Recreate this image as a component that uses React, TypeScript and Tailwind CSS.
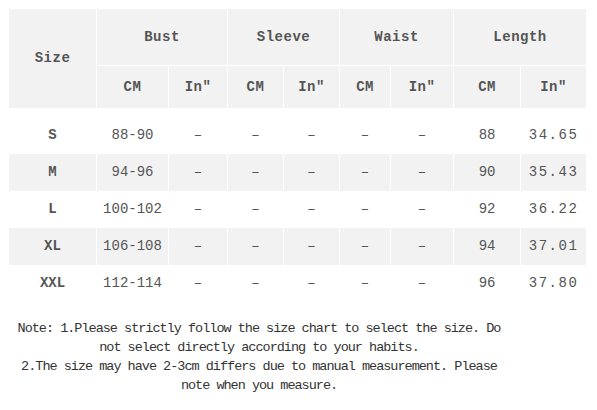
import React from 'react';

// size chart rows
interface SizeRow {
  size: string;
  bust: string;
  length: string;
  lengthIn: string;
}

const rows: SizeRow[] = [
  { size: 'S', bust: '88-90', length: '88', lengthIn: '34.65' },
  { size: 'M', bust: '94-96', length: '90', lengthIn: '35.43' },
  { size: 'L', bust: '100-102', length: '92', lengthIn: '36.22' },
  { size: 'XL', bust: '106-108', length: '94', lengthIn: '37.01' },
  { size: 'XXL', bust: '112-114', length: '96', lengthIn: '37.80' },
];

const widths = [88, 72, 59, 56, 56, 51, 63, 67, 66];

const head = "font-['Liberation_Mono',monospace] font-bold text-[14px] tracking-[0.5px] text-[#555] bg-[#f2f2f2] border border-white text-center";
const num = "font-['Liberation_Mono',monospace] text-[14px] text-[#555] text-center border-x border-white";

export default function App() {
  return (
    <main className="w-[597px] h-[410px] bg-white pt-2 pl-2">
      <table className="table-fixed border-collapse w-[578px]">
        <colgroup>
          {widths.map((w, i) => (
            <col key={i} style={{ width: w }} />
          ))}
        </colgroup>
        <thead>
          <tr className="h-[57px]">
            <th rowSpan={2} className={head}>Size</th>
            <th colSpan={2} className={head}>Bust</th>
            <th colSpan={2} className={head}>Sleeve</th>
            <th colSpan={2} className={head}>Waist</th>
            <th colSpan={2} className={head}>Length</th>
          </tr>
          <tr className="h-[43px]">
            {['Bust', 'Sleeve', 'Waist', 'Length'].map((g) => (
              <React.Fragment key={g}>
                <th className={head}>CM</th>
                <th className={head}>In"</th>
              </React.Fragment>
            ))}
          </tr>
        </thead>
        <tbody>
          <tr className="h-[8px]">
            <td colSpan={9} className="p-0" />
          </tr>
          {rows.map((r, i) => (
            <tr key={r.size} className={`h-[37px] ${i % 2 === 1 ? 'bg-[#f2f2f2]' : 'bg-white'}`}>
              <td className="font-['Liberation_Mono',monospace] font-bold text-[14px] text-[#555] text-center border-x border-white">{r.size}</td>
              <td className={num}>{r.bust}</td>
              <td className={num}>–</td>
              <td className={num}>–</td>
              <td className={num}>–</td>
              <td className={num}>–</td>
              <td className={num}>–</td>
              <td className={num}>{r.length}</td>
              <td className={`${num} tracking-[1.5px]`}>{r.lengthIn}</td>
            </tr>
          ))}
        </tbody>
      </table>

      <div className="w-[498px] ml-[2px] mt-[17px] text-center font-['Liberation_Mono',monospace] text-[13.5px] tracking-[-1px] leading-[19px] text-[#333]">
        <p>Note: 1.Please strictly follow the size chart to select the size. Do not select directly according to your habits.</p>
        <p>2.The size may have 2-3cm differs due to manual measurement. Please note when you measure.</p>
      </div>
    </main>
  );
}
